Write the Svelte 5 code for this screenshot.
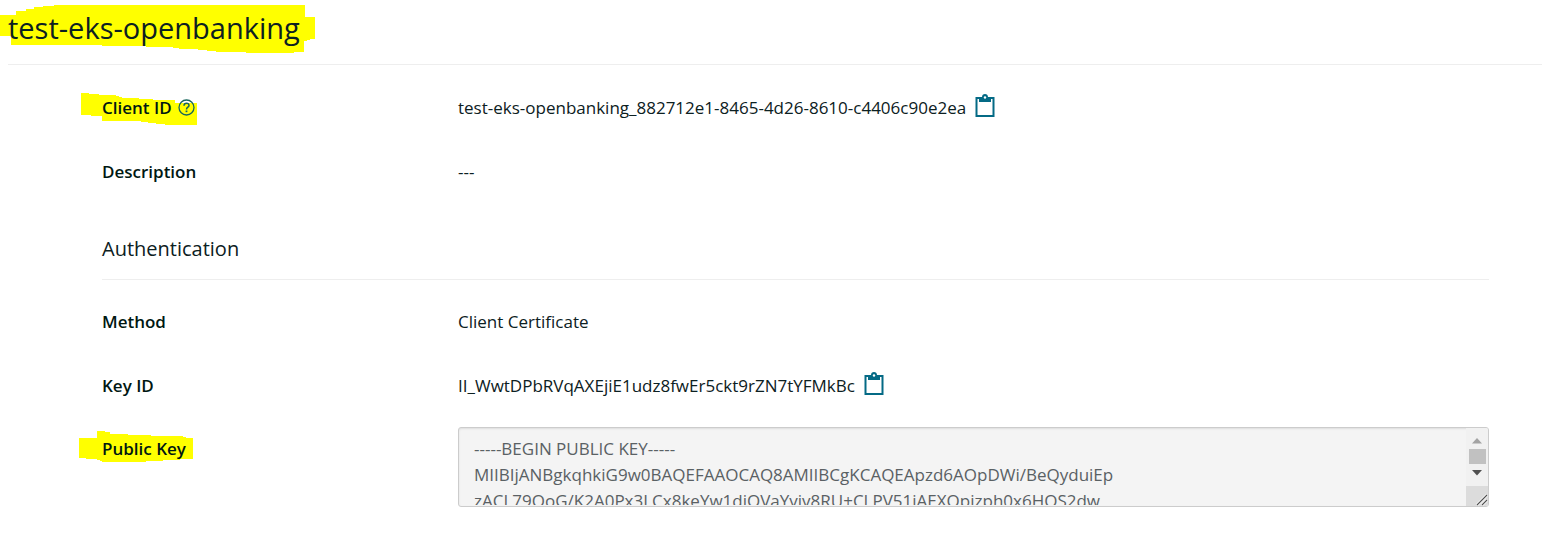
<script>
  const clientId = 'test-eks-openbanking_882712e1-8465-4d26-8610-c4406c90e2ea';
  const keyId = 'II_WwtDPbRVqAXEjiE1udz8fwEr5ckt9rZN7tYFMkBc';
  const publicKey = [
    '-----BEGIN PUBLIC KEY-----',
    'MIIBIjANBgkqhkiG9w0BAQEFAAOCAQ8AMIIBCgKCAQEApzd6AOpDWi/BeQyduiEp',
    'zACL79OoG/K2A0Px3LCx8keYw1djOVaYviv8RU+CLPV51jAEXOpizph0x6HOS2dw'
  ].join('\n');

  let keyBox;

  function copy(text) {
    navigator.clipboard?.writeText(text);
  }

  function scrollKey(amount) {
    keyBox.scrollTop += amount;
  }
</script>

{#snippet clipboard(text, label)}
  <button class="copy" aria-label={label} onclick={() => copy(text)}>
    <svg width="20" height="24" viewBox="0 0 20 24" aria-hidden="true">
      <path d="M1.5 4H18.5V22H1.5Z" fill="none" stroke="#046a85" stroke-width="2" />
      <path d="M4 3H7C7 1 8.2 0 10 0S13 1 13 3H16V8H4Z" fill="#046a85" />
      <circle cx="10" cy="3.5" r="1.2" fill="#fff" />
    </svg>
  </button>
{/snippet}

<main>
  <header>
    <h1>
      <span class="mark">
        <svg class="marker title-marker" width="316" height="54" viewBox="0 0 316 54" aria-hidden="true">
          <path d="M0 13H16V9H26V7H34V5H43V4H54V3H305V15H315V37H310V38H307V39H304V50H294V51H246V50H216V49H207V48H198V47H179V46H173V45H146V44H102V43H11V34H0Z" />
        </svg>
        <span class="words">test-eks-openbanking</span>
      </span>
    </h1>
  </header>

  <div class="details">
    <dl>
      <div class="row">
        <dt>
          <span class="mark">
            <svg class="marker" width="118" height="36" viewBox="0 0 118 36" aria-hidden="true">
              <path d="M0 3H8V4H18V5H35V6H38V7H41V8H58V9H72V10H94V13H116V35H84V34H75V33H67V32H60V31H21V26H10V25H0Z" />
            </svg>
            <span class="words">Client ID</span>
          </span>
          <button class="help" aria-label="About Client ID">
            <svg width="17" height="17" viewBox="0 0 17 17" fill="none" stroke="#17655c" aria-hidden="true">
              <circle cx="8.5" cy="8.5" r="7.5" stroke-width="1.3" />
              <path d="M6 6.8C6 5.2 7 4.3 8.5 4.3S11 5.2 11 6.5C11 8.2 8.5 8.2 8.5 10.4" stroke-width="1.5" />
              <path d="M8.5 11.5V13.2" stroke-width="1.8" />
            </svg>
          </button>
        </dt>
        <dd>{clientId}{@render clipboard(clientId, 'Copy Client ID')}</dd>
      </div>
      <div class="row">
        <dt>Description</dt>
        <dd>---</dd>
      </div>
    </dl>

    <h2>Authentication</h2>

    <dl>
      <div class="row">
        <dt>Method</dt>
        <dd>Client Certificate</dd>
      </div>
      <div class="row">
        <dt>Key ID</dt>
        <dd>{keyId}{@render clipboard(keyId, 'Copy Key ID')}</dd>
      </div>
    </dl>

    <div class="key-row">
      <label for="public-key">
        <span class="mark">
          <svg class="marker key-marker" width="118" height="36" viewBox="0 0 118 36" aria-hidden="true">
            <path d="M0 8H18V1H26V2H31V4H49V5H72V6H104V7H107V8H114V29H101V30H84V31H67V32H23V31H21V30H18V29H7V28H0Z" />
          </svg>
          <span class="words">Public Key</span>
        </span>
      </label>
      <div class="key-box">
        <textarea id="public-key" bind:this={keyBox} readonly wrap="off" value={publicKey}></textarea>
        <div class="scroller">
          <button aria-label="Scroll up" onclick={() => scrollKey(-26)}>
            <svg width="10" height="6" viewBox="0 0 10 6" aria-hidden="true"><path d="M0 5.5L5 0L10 5.5Z" fill="#a3a3a3" /></svg>
          </button>
          <div class="thumb"></div>
          <button aria-label="Scroll down" onclick={() => scrollKey(26)}>
            <svg width="10" height="6" viewBox="0 0 10 6" aria-hidden="true"><path d="M0 0H10L5 5.5Z" fill="#505050" /></svg>
          </button>
          <div class="grip">
            <svg width="12" height="12" viewBox="0 0 12 12" aria-hidden="true">
              <path d="M1 11L11 1M6 11L11 6" stroke="#fff" stroke-width="2.5" />
              <path d="M1 11L11 1M6 11L11 6" stroke="#505050" stroke-width="1.1" />
            </svg>
          </div>
        </div>
      </div>
    </div>
  </div>
</main>

<style>
  :global(body) {
    background: #fff;
  }

  main {
    overflow-x: hidden;
    color: #0c2022;
    font: 400 17px/24px "Open Sans", "Noto Sans", sans-serif;
  }

  header {
    margin-left: 8px;
    border-bottom: 1px solid #eee;
  }

  h1 {
    margin: 0;
    padding: 8px 0 16px;
    font-size: 29px;
    font-weight: 400;
    line-height: 40px;
  }

  .mark {
    position: relative;
  }

  .words {
    position: relative;
  }

  .marker {
    position: absolute;
    top: -6px;
    left: -21px;
    fill: #ff0;
  }

  .title-marker {
    top: -6px;
    left: -8px;
  }

  .key-marker {
    top: -7px;
    left: -23px;
  }

  .details {
    margin: 0 53px 0 102px;
    padding-top: 11px;
  }

  dl,
  dd {
    margin: 0;
  }

  .row,
  .key-row {
    display: grid;
    grid-template-columns: 356px 1fr;
  }

  .row {
    align-items: center;
    height: 64px;
  }

  dt,
  dd {
    display: flex;
    align-items: center;
  }

  dt,
  label {
    color: #001712;
    font-weight: 600;
  }

  button {
    display: flex;
    padding: 0;
    border: 0;
    background: none;
    cursor: pointer;
  }

  .help {
    position: relative;
    margin: -2px 0 0 6px;
  }

  .copy {
    margin: -4px 0 0 9px;
  }

  h2 {
    margin: 32px 0 10px;
    padding-bottom: 17px;
    border-bottom: 1px solid #eee;
    font-size: 20px;
    font-weight: 400;
    line-height: 26px;
  }

  .key-row label {
    padding-top: 19px;
  }

  .key-box {
    display: flex;
    height: 78px;
    margin-top: 9px;
    overflow: hidden;
    border: 1px solid #ccc;
    border-radius: 3px;
    background: #f4f4f4;
    box-shadow: inset 0 1px 2px #ddd;
  }

  textarea {
    flex: 1;
    min-width: 0;
    margin-bottom: 1px;
    padding: 8px 15px;
    border: 0;
    outline: 0;
    background: none;
    color: #5a6164;
    font: inherit;
    line-height: 26px;
    resize: none;
    scrollbar-width: none;
  }

  .scroller {
    display: flex;
    flex-direction: column;
    align-items: center;
    width: 22px;
    padding-top: 4px;
    background: #f1f1f1;
  }

  .scroller button {
    align-items: center;
    justify-content: center;
    width: 17px;
    height: 17px;
  }

  .thumb {
    width: 17px;
    height: 15px;
    background: #c1c1c1;
  }

  .grip {
    display: flex;
    align-items: flex-end;
    justify-content: flex-end;
    width: 22px;
    height: 20px;
    margin-top: auto;
    background: #dcdcdc;
  }
</style>
